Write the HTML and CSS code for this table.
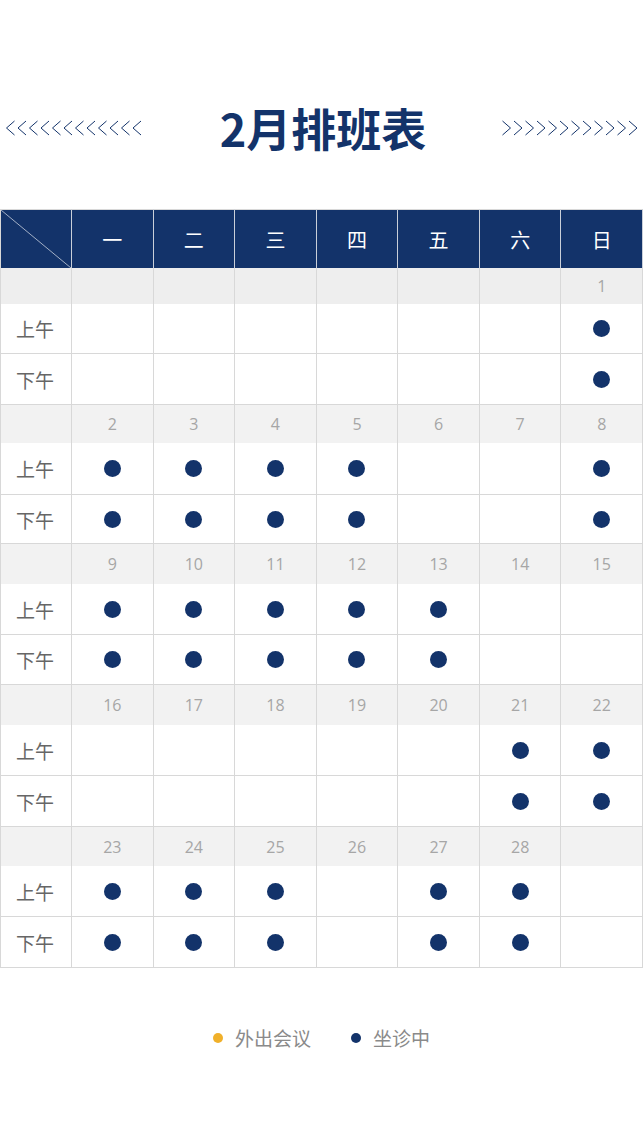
FILE: index.html
```html
<!DOCTYPE html>
<html lang="zh">
<head>
<meta charset="utf-8">
<title>2月排班表</title>
<link rel="stylesheet" href="styles.css">
</head>
<body>
<div class="top">
  <svg class="chev" width="136" height="16" viewBox="0 0 136 16">
    <g fill="none" stroke="#13336a" stroke-width="1">
      <polyline points="8.5,1 0.5,8 8.5,15"/><polyline points="20,1 12,8 20,15"/><polyline points="31.5,1 23.5,8 31.5,15"/><polyline points="43,1 35,8 43,15"/><polyline points="54.5,1 46.5,8 54.5,15"/><polyline points="66,1 58,8 66,15"/><polyline points="77.5,1 69.5,8 77.5,15"/><polyline points="89,1 81,8 89,15"/><polyline points="100.5,1 92.5,8 100.5,15"/><polyline points="112,1 104,8 112,15"/><polyline points="123.5,1 115.5,8 123.5,15"/><polyline points="135,1 127,8 135,15"/>
    </g>
  </svg>
  <h1 class="title">2月排班表</h1>
  <svg class="chev" width="136" height="16" viewBox="0 0 136 16">
    <g fill="none" stroke="#13336a" stroke-width="1">
      <polyline points="0.5,1 8.5,8 0.5,15"/><polyline points="12,1 20,8 12,15"/><polyline points="23.5,1 31.5,8 23.5,15"/><polyline points="35,1 43,8 35,15"/><polyline points="46.5,1 54.5,8 46.5,15"/><polyline points="58,1 66,8 58,15"/><polyline points="69.5,1 77.5,8 69.5,15"/><polyline points="81,1 89,8 81,15"/><polyline points="92.5,1 100.5,8 92.5,15"/><polyline points="104,1 112,8 104,15"/><polyline points="115.5,1 123.5,8 115.5,15"/><polyline points="127,1 135,8 127,15"/>
    </g>
  </svg>
</div>

<div class="grid">
  <div class="c hd corner"><svg class="diag" viewBox="0 0 100 100" preserveAspectRatio="none"><line x1="0" y1="0" x2="100" y2="100" stroke="#a3b0c6" stroke-width="1" vector-effect="non-scaling-stroke"/></svg></div>
  <div class="c hd">一</div><div class="c hd">二</div><div class="c hd">三</div><div class="c hd">四</div><div class="c hd">五</div><div class="c hd">六</div><div class="c hd">日</div>

  <!-- week 1 -->
  <div class="c d first"></div><div class="c d first"></div><div class="c d first"></div><div class="c d first"></div><div class="c d first"></div><div class="c d first"></div><div class="c d first"></div><div class="c d first">1</div>
  <div class="c am lbl">上午</div><div class="c am"></div><div class="c am"></div><div class="c am"></div><div class="c am"></div><div class="c am"></div><div class="c am"></div><div class="c am"><span class="dot"></span></div>
  <div class="c pm lbl">下午</div><div class="c pm"></div><div class="c pm"></div><div class="c pm"></div><div class="c pm"></div><div class="c pm"></div><div class="c pm"></div><div class="c pm"><span class="dot"></span></div>

  <!-- week 2 -->
  <div class="c d"></div><div class="c d">2</div><div class="c d">3</div><div class="c d">4</div><div class="c d">5</div><div class="c d">6</div><div class="c d">7</div><div class="c d">8</div>
  <div class="c am lbl">上午</div><div class="c am"><span class="dot"></span></div><div class="c am"><span class="dot"></span></div><div class="c am"><span class="dot"></span></div><div class="c am"><span class="dot"></span></div><div class="c am"></div><div class="c am"></div><div class="c am"><span class="dot"></span></div>
  <div class="c pm lbl">下午</div><div class="c pm"><span class="dot"></span></div><div class="c pm"><span class="dot"></span></div><div class="c pm"><span class="dot"></span></div><div class="c pm"><span class="dot"></span></div><div class="c pm"></div><div class="c pm"></div><div class="c pm"><span class="dot"></span></div>

  <!-- week 3 -->
  <div class="c d"></div><div class="c d">9</div><div class="c d">10</div><div class="c d">11</div><div class="c d">12</div><div class="c d">13</div><div class="c d">14</div><div class="c d">15</div>
  <div class="c am lbl">上午</div><div class="c am"><span class="dot"></span></div><div class="c am"><span class="dot"></span></div><div class="c am"><span class="dot"></span></div><div class="c am"><span class="dot"></span></div><div class="c am"><span class="dot"></span></div><div class="c am"></div><div class="c am"></div>
  <div class="c pm lbl">下午</div><div class="c pm"><span class="dot"></span></div><div class="c pm"><span class="dot"></span></div><div class="c pm"><span class="dot"></span></div><div class="c pm"><span class="dot"></span></div><div class="c pm"><span class="dot"></span></div><div class="c pm"></div><div class="c pm"></div>

  <!-- week 4 -->
  <div class="c d"></div><div class="c d">16</div><div class="c d">17</div><div class="c d">18</div><div class="c d">19</div><div class="c d">20</div><div class="c d">21</div><div class="c d">22</div>
  <div class="c am lbl">上午</div><div class="c am"></div><div class="c am"></div><div class="c am"></div><div class="c am"></div><div class="c am"></div><div class="c am"><span class="dot"></span></div><div class="c am"><span class="dot"></span></div>
  <div class="c pm lbl">下午</div><div class="c pm"></div><div class="c pm"></div><div class="c pm"></div><div class="c pm"></div><div class="c pm"></div><div class="c pm"><span class="dot"></span></div><div class="c pm"><span class="dot"></span></div>

  <!-- week 5 -->
  <div class="c d"></div><div class="c d">23</div><div class="c d">24</div><div class="c d">25</div><div class="c d">26</div><div class="c d">27</div><div class="c d">28</div><div class="c d"></div>
  <div class="c am lbl">上午</div><div class="c am"><span class="dot"></span></div><div class="c am"><span class="dot"></span></div><div class="c am"><span class="dot"></span></div><div class="c am"></div><div class="c am"><span class="dot"></span></div><div class="c am"><span class="dot"></span></div><div class="c am"></div>
  <div class="c pm lbl">下午</div><div class="c pm"><span class="dot"></span></div><div class="c pm"><span class="dot"></span></div><div class="c pm"><span class="dot"></span></div><div class="c pm"></div><div class="c pm"><span class="dot"></span></div><div class="c pm"><span class="dot"></span></div><div class="c pm"></div>
</div>

<div class="legend">
  <div class="item"><span class="ldot yellow"></span>外出会议</div>
  <div class="item"><span class="ldot navy"></span>坐诊中</div>
</div>
</body>
</html>
```

FILE: styles.css
```css
html, body {
  margin: 0;
  padding: 0;
  background: #ffffff;
}
body {
  width: 643px;
  font-family: "Noto Sans CJK SC", "Noto Sans", sans-serif;
}
.top {
  height: 209px;
  box-sizing: border-box;
  padding: 46px 5px 0 6px;
  display: flex;
  align-items: center;
  justify-content: space-between;
}
.chev {
  display: block;
}
.title {
  margin: 0 0 0 2px;
  font-size: 45px;
  font-weight: 700;
  color: #13336a;
  line-height: 56px;
  letter-spacing: 0;
}
.grid {
  display: grid;
  grid-template-columns: 71px repeat(7, 1fr);
  grid-template-rows:
    59px
    36px 50px 51px
    38px 52px 49px
    40px 51px 50px
    40px 51px 51px
    39px 51px 51px;
  width: 643px;
  box-sizing: border-box;
  border-left: 1px solid #d8d8d8;
}
.c {
  border-right: 1px solid #d8d8d8;
  border-bottom: 1px solid #d8d8d8;
  display: flex;
  align-items: center;
  justify-content: center;
  box-sizing: border-box;
}
.hd {
  background: #13336a;
  color: #ffffff;
  font-size: 20px;
  border-right-color: #c9cfd9;
  border-bottom: none;
  border-top: 1px solid #d8d8d8;
}
.corner {
  position: relative;
  padding: 0;
}
.diag {
  position: absolute;
  left: 0;
  top: 0;
  width: 100%;
  height: 100%;
}
.d {
  background: #f2f2f2;
  color: #a6a6a6;
  font-family: "Open Sans", "Noto Sans", sans-serif;
  font-size: 16px;
  border-bottom: none;
}
.d.first {
  background: #eeeeee;
}
.lbl {
  color: #666666;
  font-size: 19px;
  padding-right: 2px;
}
.dot {
  width: 17px;
  height: 17px;
  border-radius: 50%;
  background: #13336a;
}
.legend {
  display: flex;
  justify-content: center;
  gap: 40px;
  margin-top: 58px;
  line-height: 24px;
  font-size: 19px;
  color: #8a8a8a;
}
.item {
  display: flex;
  align-items: center;
  gap: 12px;
}
.ldot {
  width: 10px;
  height: 10px;
  border-radius: 50%;
}
.yellow { background: #f0b02a; }
.navy { background: #13336a; }
```
